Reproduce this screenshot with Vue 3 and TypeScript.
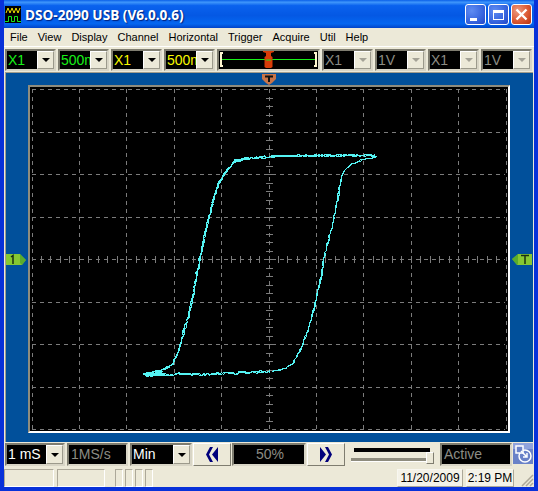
<template>
  <div class="window">
    <header class="titlebar">
      <svg class="app-icon" width="16" height="17" viewBox="0 0 16 17">
        <rect width="16" height="17" fill="#000" />
        <path d="M1 7 L3 2 L5 7 L7 2 L9 7 L11 2 L13 7 L15 2" fill="none" stroke="#f4e400" />
        <path d="M0 15.500 H3.500 V10.500 H6.500 V15.500 H9.500 V10.500 H12.500 V15.500 H16" fill="none" stroke="#18e818" />
      </svg>
      <span class="title">DSO-2090 USB (V6.0.0.6)</span>
      <div class="caption-buttons">
        <button class="cap" type="button" aria-label="Minimize"><i class="min-glyph"></i></button>
        <button class="cap" type="button" aria-label="Maximize"><i class="max-glyph"></i></button>
        <button class="cap close" type="button" aria-label="Close">
          <svg width="13" height="13" viewBox="0 0 13 13"><path d="M1.500 1.500 L11.500 11.500 M11.500 1.500 L1.500 11.500" stroke="#fff" stroke-width="2.400" /></svg>
        </button>
      </div>
    </header>

    <nav class="menubar">
      <span v-for="m in menus" :key="m">{{ m }}</span>
    </nav>

    <div class="toolbar">
      <template v-for="c in topCombos" :key="c.id">
        <div v-if="c.id === 'pos'" class="well slider-well">
          <i class="bracket left"></i>
          <i class="green-line"></i>
          <i class="bracket right"></i>
          <svg class="trig-mark" width="11" height="17" viewBox="0 0 11 17">
            <path d="M0 0 H11 V1 L8 2 V5 L9.500 6 V16 L8 17 H3 L1.500 16 V6 L3 5 V2 L0 1 Z" fill="#d83c08" />
            <path d="M3 9 H8" stroke="#18e818" />
          </svg>
        </div>
        <div v-else class="well combo">
          <span class="value" :class="c.color">{{ c.text }}</span>
          <span class="drop"><i class="arrow" :class="{ off: c.color === 'gray' }"></i></span>
        </div>
      </template>
    </div>

    <main class="scope">
      <div class="plot">
        <svg class="screen" width="478" height="344" viewBox="30 87 478 344">
          <g stroke="#7c7c7c" fill="none" shape-rendering="crispEdges">
            <path v-for="x in gridX" :key="'x' + x" :d="`M${x} 89 V429`" stroke-dasharray="4 4" />
            <path v-for="y in gridY" :key="'y' + y" :d="`M32 ${y} H505`" stroke-dasharray="4 4" />
            <path v-for="x in ticksX" :key="'tx' + x" :d="`M${x} 256 V263`" />
            <path v-for="y in ticksY" :key="'ty' + y" :d="`M266 ${y} H273`" />
          </g>
          <g fill="none" stroke="#55f4f4" shape-rendering="crispEdges">
            <polyline v-for="(p, i) in traces" :key="i" :points="p" />
          </g>
        </svg>
      </div>

      <svg class="marker top-marker" width="14" height="11" viewBox="0 0 14 11">
        <path d="M0 0 H14 V5 L10 9 L7 11 L4 9 L0 5 Z" fill="#c87448" />
        <path d="M3 2.500 H11 M7 2.500 V8" stroke="#111" stroke-width="2" />
      </svg>
      <svg class="marker left-marker" width="20" height="11" viewBox="0 0 20 11">
        <path d="M0 0 H14 L20 6 L16 11 H0 Z" fill="#86c832" />
        <path d="M14 0 L20 6 L16 11 L14 9 Z" fill="#3e9a28" opacity=".6" />
        <path d="M5 3 L7 1.500 V10" stroke="#1a3010" stroke-width="1.500" fill="none" />
      </svg>
      <svg class="marker right-marker" width="20" height="11" viewBox="0 0 20 11">
        <path d="M20 0 H6 L0 5 L5 11 H20 Z" fill="#86c832" />
        <path d="M6 0 L0 5 L5 11 L6 10 Z" fill="#3e9a28" opacity=".6" />
        <path d="M9 1.500 H17 M13 1.500 V10" stroke="#1a3010" stroke-width="1.500" />
      </svg>
    </main>

    <div class="controls">
      <div class="well combo w-time">
        <span class="value white">1 mS</span>
        <span class="drop"><i class="arrow"></i></span>
      </div>
      <div class="well readout w-rate"><span class="value gray">1MS/s</span></div>
      <div class="well combo w-mode">
        <span class="value white">Min</span>
        <span class="drop"><i class="arrow"></i></span>
      </div>
      <button class="nav-btn" type="button" aria-label="Back">
        <svg width="12" height="15" viewBox="0 0 12 15"><path d="M12 0 L6 7.500 L12 15 Z M7 0 H4 L0 7.500 L4 15 H7 L3 7.500 Z" fill="#00007c" /></svg>
      </button>
      <div class="well readout w-pct"><span class="value gray center">50%</span></div>
      <button class="nav-btn" type="button" aria-label="Forward">
        <svg width="12" height="15" viewBox="0 0 12 15"><path d="M0 0 L6 7.500 L0 15 Z M5 0 H8 L12 7.500 L8 15 H5 L9 7.500 Z" fill="#00007c" /></svg>
      </button>
      <div class="level">
        <i class="level-bar"></i>
        <i class="level-groove"></i>
        <i class="level-thumb"></i>
      </div>
      <div class="well readout w-active"><span class="value gray">Active</span></div>
      <div class="mode-tile">
        <svg width="20" height="21" viewBox="0 0 20 21">
          <rect width="20" height="21" fill="#6a82c8" />
          <rect x="0" y="0" width="20" height="6" fill="#8ea2dc" />
          <circle cx="12" cy="13" r="6" fill="none" stroke="#fff" stroke-width="1.500" />
          <rect x="3" y="3" width="7" height="7" fill="#6a82c8" stroke="#fff" stroke-width="1.500" />
          <path d="M8 8 L14 14 M14 10 V14 H10" fill="none" stroke="#fff" stroke-width="1.500" />
        </svg>
      </div>
    </div>

    <footer class="statusbar">
      <span class="pane p1"></span>
      <span class="pane p2"></span>
      <span class="pane small first"></span>
      <span class="pane small"></span>
      <span class="pane small"></span>
      <span class="pane small"></span>
      <span class="clock date">11/20/2009</span>
      <span class="clock time">2:19 PM</span>
      <svg class="grip" width="14" height="14" viewBox="0 0 14 14">
        <path d="M13 2 L2 13 M13 6 L6 13 M13 10 L10 13" stroke="#aca899" stroke-width="1.500" />
      </svg>
    </footer>
  </div>
</template>

<script setup lang="ts">
const menus = ['File', 'View', 'Display', 'Channel', 'Horizontal', 'Trigger', 'Acquire', 'Util', 'Help']

const topCombos = [
  { id: 'a', text: 'X1', color: 'green' },
  { id: 'b', text: '500m', color: 'green' },
  { id: 'c', text: 'X1', color: 'yellow' },
  { id: 'd', text: '500m', color: 'yellow' },
  { id: 'pos', text: '', color: '' },
  { id: 'e', text: 'X1', color: 'gray' },
  { id: 'f', text: '1V', color: 'gray' },
  { id: 'g', text: 'X1', color: 'gray' },
  { id: 'h', text: '1V', color: 'gray' }
]

const gridX = Array.from({ length: 11 }, (_, k) => Math.round(31.5 + 47.4 * k))
const gridY = Array.from({ length: 9 }, (_, k) => Math.round(89 + 42.5 * k))
const ticksX = Array.from({ length: 49 }, (_, k) => Math.round(41 + 9.48 * k)).filter(x => x < 505)
const ticksY = Array.from({ length: 39 }, (_, k) => Math.round(97.5 + 8.5 * k)).filter(y => y < 429)

type Pt = [number, number]

const rising: Pt[] = [
  [143, 374], [160, 370], [172, 364], [177, 353], [183, 333], [190, 308], [195, 282], [198, 265],
  [203, 240], [209, 215], [213, 198], [219, 182], [225, 172], [233, 162], [247, 158]
]
const top: Pt[] = [[234, 160], [247, 158], [260, 157], [280, 155.5], [327, 155], [367, 155], [376, 155]]
const falling: Pt[] = [
  [376, 156], [373, 157], [360, 160], [350, 164], [343, 172], [340, 182], [335, 210], [332, 225],
  [328, 240], [323, 258], [322, 270], [310, 323], [303, 342], [293, 363], [283, 369], [270, 371]
]
const bottom: Pt[] = [[270, 371], [250, 372], [223, 373], [197, 374], [182, 373], [163, 375], [143, 375]]

let seed = 2090
const rnd = () => {
  seed = (seed * 16807) % 2147483647
  return seed / 2147483647 - 0.5
}

// walk a branch pixel by pixel and wobble it, the capture is a noisy sampled signal
const sampled = (pts: Pt[], wobble: number) => {
  const out: string[] = []
  for (let i = 0; i < pts.length - 1; i++) {
    const [x0, y0] = pts[i]
    const [x1, y1] = pts[i + 1]
    const steps = Math.max(1, Math.round(Math.max(Math.abs(x1 - x0), Math.abs(y1 - y0)) / 2))
    const steep = Math.abs(y1 - y0) > Math.abs(x1 - x0)
    for (let s = 0; s < steps; s++) {
      const t = s / steps
      const n = rnd() * wobble
      const x = x0 + (x1 - x0) * t + (steep ? n : 0)
      const y = y0 + (y1 - y0) * t + (steep ? 0 : n)
      out.push(`${Math.round(x) + 0.5},${Math.round(y) + 0.5}`)
    }
  }
  return out.join(' ')
}

const traces = [
  sampled(rising, 1.5),
  sampled(rising, 2),
  sampled(rising, 2.5),
  sampled(top, 1.5),
  sampled(top, 2),
  sampled(top, 2.5),
  sampled(falling, 1.2),
  sampled(falling, 1.6),
  sampled(bottom, 2.2),
  sampled(bottom, 2.6),
  sampled([[143, 373], [162, 371], [146, 375], [165, 373], [144, 376]], 1)
]
</script>

<style>
html,
body {
  margin: 0;
  background: #0054e3;
}
</style>

<style scoped>
.window {
  width: 538px;
  height: 491px;
  box-sizing: border-box;
  display: flex;
  flex-direction: column;
  overflow: hidden;
  background: #ece9d8;
  border: solid #0831d9;
  border-width: 0 4px 4px;
  font-family: "Liberation Sans", sans-serif;
}

.titlebar,
.menubar,
.toolbar,
.scope,
.controls,
.statusbar {
  box-sizing: border-box;
}

.titlebar {
  flex: none;
  height: 28px;
  margin: 0 -4px;
  padding: 0 6px 0 5px;
  display: flex;
  align-items: center;
  gap: 4px;
  background: linear-gradient(180deg, #0a5fe8 0%, #3f96fb 8%, #0a62ee 20%, #0458e4 55%, #0466f0 85%, #0043c8 100%);
}

.app-icon {
  flex: none;
  margin-top: 1px;
}

.title {
  color: #fff;
  font-family: "Open Sans", "Liberation Sans", sans-serif;
  font-size: 13.6px;
  font-weight: 700;
  white-space: nowrap;
  text-shadow: 1px 1px 1px #00207c;
}

.caption-buttons {
  margin-left: auto;
  margin-top: 1px;
  display: flex;
  gap: 2px;
}

.cap {
  width: 21px;
  height: 21px;
  padding: 0;
  display: flex;
  align-items: center;
  justify-content: center;
  box-sizing: border-box;
  border: 1px solid #fff;
  border-radius: 3px;
  background: radial-gradient(circle at 30% 30%, #5f8cf2 0%, #3a68e0 55%, #2347c8 100%);
}

.cap.close {
  background: radial-gradient(circle at 30% 30%, #ec9a80 0%, #dc5a34 55%, #b8300e 100%);
}

.min-glyph {
  width: 7px;
  height: 3px;
  margin: 9px 5px 0 0;
  background: #fff;
}

.max-glyph {
  width: 11px;
  height: 10px;
  box-sizing: border-box;
  border: 1px solid #fff;
  border-top-width: 3px;
}

.menubar {
  flex: none;
  height: 19px;
  padding-left: 6px;
  display: flex;
  align-items: center;
  gap: 10px;
  color: #000;
  font-size: 11px;
  border-bottom: 1px solid #fff;
}

.toolbar {
  flex: none;
  height: 24px;
  padding: 2px 0 0 1px;
  display: flex;
  gap: 2px;
}

.well {
  box-sizing: border-box;
  display: flex;
  align-items: stretch;
  background: #000;
  border: 2px solid;
  border-color: #7f7d70 #d8d5c6 #d8d5c6 #7f7d70;
  height: 23px;
}

.toolbar .well {
  height: 22px;
}

.toolbar .combo {
  width: 51px;
}

.slider-well {
  width: 103px;
  position: relative;
}

.bracket {
  position: absolute;
  top: 1px;
  width: 3px;
  height: 15px;
  box-sizing: border-box;
  border: solid #fff6d0;
  border-width: 2px 0 2px 2px;
}

.bracket.left {
  left: 1px;
}

.bracket.right {
  right: 1px;
  border-width: 2px 2px 2px 0;
}

.green-line {
  position: absolute;
  left: 3px;
  right: 3px;
  top: 8px;
  height: 1px;
  background: #18f018;
}

.trig-mark {
  position: absolute;
  left: 44px;
  top: 0;
}

.value {
  flex: 1;
  min-width: 0;
  overflow: hidden;
  padding-left: 1px;
  font-family: "Liberation Sans", sans-serif;
  font-size: 14px;
  line-height: 18px;
  white-space: nowrap;
}

.value.center {
  text-align: center;
}

.green {
  color: #18f018;
}

.yellow {
  color: #f8f800;
}

.gray {
  color: #8c8c84;
}

.white {
  color: #fff;
}

.drop {
  flex: none;
  width: 15px;
  display: flex;
  align-items: center;
  justify-content: center;
  background: #ece9d8;
  border: 1px solid;
  border-color: #fff #9c9a8c #9c9a8c #fff;
}

.arrow {
  width: 0;
  height: 0;
  border: 4px solid transparent;
  border-top: 4px solid #000;
  border-bottom: 0;
}

.arrow.off {
  border-top-color: #a4a296;
}

.scope {
  flex: none;
  height: 370px;
  margin: 1px 0 0 1px;
  width: 528px;
  position: relative;
  background: #01509b;
  border: solid #a09c8c;
  border-width: 1px 0 0 1px;
  padding: 12px 0 0 22px;
}

.plot {
  width: 482px;
  height: 348px;
  box-sizing: border-box;
  border: 2px solid;
  border-color: #8e8c7e #fff #fff #8e8c7e;
  background: #000;
}

.screen {
  display: block;
}

.marker {
  position: absolute;
}

.top-marker {
  left: 256px;
  top: 1px;
}

.left-marker {
  left: 0;
  top: 181px;
}

.right-marker {
  right: 1px;
  top: 181px;
}

.controls {
  flex: none;
  height: 25px;
  padding: 1px 0 0 1px;
  display: flex;
  align-items: flex-start;
  gap: 2px;
}

.w-time {
  width: 60px;
}

.w-rate {
  width: 61px;
}

.w-mode {
  width: 62px;
}

.w-pct {
  width: 74px;
  margin-left: -1px;
}

.w-active {
  width: 72px;
  margin-left: 2px;
}

.readout .value {
  padding-left: 2px;
}

.nav-btn {
  width: 38px;
  height: 23px;
  margin-left: -1px;
  padding: 0;
  display: flex;
  align-items: center;
  justify-content: center;
  background: #ece9d8;
  border: 1px solid;
  border-color: #fff #7f7d70 #7f7d70 #fff;
}

.level {
  width: 86px;
  height: 23px;
  margin-left: 3px;
  position: relative;
  display: flex;
  flex-direction: column;
}

.level-bar {
  height: 4px;
  margin: 5px 6px 0 4px;
  background: #000;
}

.level-groove {
  height: 3px;
  margin: 6px 4px 0 1px;
  background: #8e8c7e;
  border-bottom: 1px solid #fff;
}

.level-thumb {
  position: absolute;
  left: 76px;
  top: 9px;
  width: 6px;
  height: 10px;
  background: #ece9d8;
  border: 1px solid;
  border-color: #fff #7f7d70 #7f7d70 #fff;
}

.mode-tile {
  margin-left: -1px;
  height: 21px;
}

.mode-tile svg {
  display: block;
}

.statusbar {
  flex: 1;
  min-height: 0;
  padding-top: 2px;
  display: flex;
  align-items: flex-start;
  position: relative;
}

.pane {
  box-sizing: border-box;
  height: 18px;
  border: 1px solid;
  border-color: #aca899 #fff #fff #aca899;
}

.p1 {
  width: 50px;
}

.p2 {
  width: 48px;
  margin-left: 3px;
}

.small {
  width: 8px;
  margin-left: 2px;
}

.small.first {
  margin-left: 10px;
}

.clock {
  box-sizing: border-box;
  height: 18px;
  flex: none;
  text-align: center;
  font-size: 12px;
  line-height: 16px;
  white-space: nowrap;
  color: #000;
  background: #f4f2e8;
  border: 1px solid;
  border-color: #f8f7f0 #aca899 #aca899 #f8f7f0;
}

.date {
  width: 66px;
  margin-left: auto;
}

.time {
  width: 48px;
  margin-left: 3px;
  margin-right: 20px;
}

.grip {
  position: absolute;
  right: 0;
  bottom: 0;
}
</style>
